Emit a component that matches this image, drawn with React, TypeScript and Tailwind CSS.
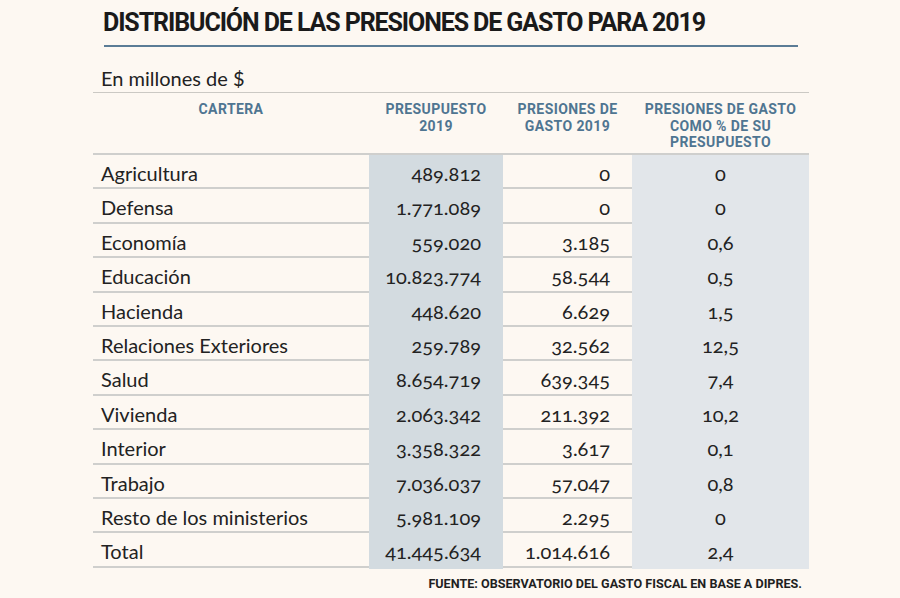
import React from "react";

type Row = { cartera: string; presupuesto: string; presiones: string; pct: string };

const rows: Row[] = [
  { cartera: "Agricultura", presupuesto: "489.812", presiones: "0", pct: "0" },
  { cartera: "Defensa", presupuesto: "1.771.089", presiones: "0", pct: "0" },
  { cartera: "Economía", presupuesto: "559.020", presiones: "3.185", pct: "0,6" },
  { cartera: "Educación", presupuesto: "10.823.774", presiones: "58.544", pct: "0,5" },
  { cartera: "Hacienda", presupuesto: "448.620", presiones: "6.629", pct: "1,5" },
  { cartera: "Relaciones Exteriores", presupuesto: "259.789", presiones: "32.562", pct: "12,5" },
  { cartera: "Salud", presupuesto: "8.654.719", presiones: "639.345", pct: "7,4" },
  { cartera: "Vivienda", presupuesto: "2.063.342", presiones: "211.392", pct: "10,2" },
  { cartera: "Interior", presupuesto: "3.358.322", presiones: "3.617", pct: "0,1" },
  { cartera: "Trabajo", presupuesto: "7.036.037", presiones: "57.047", pct: "0,8" },
  { cartera: "Resto de los ministerios", presupuesto: "5.981.109", presiones: "2.295", pct: "0" },
  { cartera: "Total", presupuesto: "41.445.634", presiones: "1.014.616", pct: "2,4" },
];

const App = () => {
  return (
    <div className="w-[900px] h-[598px] bg-[#fdf8f2] overflow-hidden font-['Lato','Open_Sans',sans-serif] text-[#222]">
      {/* Title */}
      <div className="pl-[103px] pt-[8px] h-[45px]">
        <h1 className="font-['Roboto',sans-serif] font-bold text-[25px] leading-[30px] tracking-[-1.1px] text-[#1a1a1a]">
          DISTRIBUCIÓN DE LAS PRESIONES DE GASTO PARA 2019
        </h1>
      </div>
      <div className="ml-[104px] w-[694px] h-[2px] bg-[#5b7c96]" />

      {/* Table */}
      <div className="ml-[93px] w-[716px]">
        <div className="pl-[8px] pt-[19px] h-[46px] text-[20px] leading-[24px] border-b border-[#cbc9c4]">
          En millones de $
        </div>

        <div className="grid grid-cols-[276px_134px_129px_177px] h-[62px] border-b-2 border-[#cfcfcd] font-['Roboto',sans-serif] font-bold text-[14px] leading-[16.5px] tracking-[0.4px] text-[#4f7591] text-center">
          <div className="pt-[8px]">CARTERA</div>
          <div className="pt-[8px]">
            PRESUPUESTO
            <br />
            2019
          </div>
          <div className="pt-[8px]">
            PRESIONES DE
            <br />
            GASTO 2019
          </div>
          <div className="pt-[8px]">
            PRESIONES DE GASTO
            <br />
            COMO % DE SU
            <br />
            PRESUPUESTO
          </div>
        </div>

        {rows.map((r) => (
          <div
            key={r.cartera}
            className="grid grid-cols-[276px_134px_129px_177px] h-[34.4px] border-b-2 border-[#cfcfcd] text-[20px] leading-[36px] oldstyle-nums"
          >
            <div className="pl-[8px]">{r.cartera}</div>
            <div className="bg-[#d3dbe0] text-right pr-[22px]">{r.presupuesto}</div>
            <div className="text-right pr-[22px]">{r.presiones}</div>
            <div className="bg-[#e2e6ea] text-center">{r.pct}</div>
          </div>
        ))}

        <div className="pt-[8px] pr-[7px] text-right font-['Roboto',sans-serif] font-bold text-[12.6px] leading-[16px] text-[#1f1f1f]">
          FUENTE: OBSERVATORIO DEL GASTO FISCAL EN BASE A DIPRES.
        </div>
      </div>
    </div>
  );
};

export default App;
